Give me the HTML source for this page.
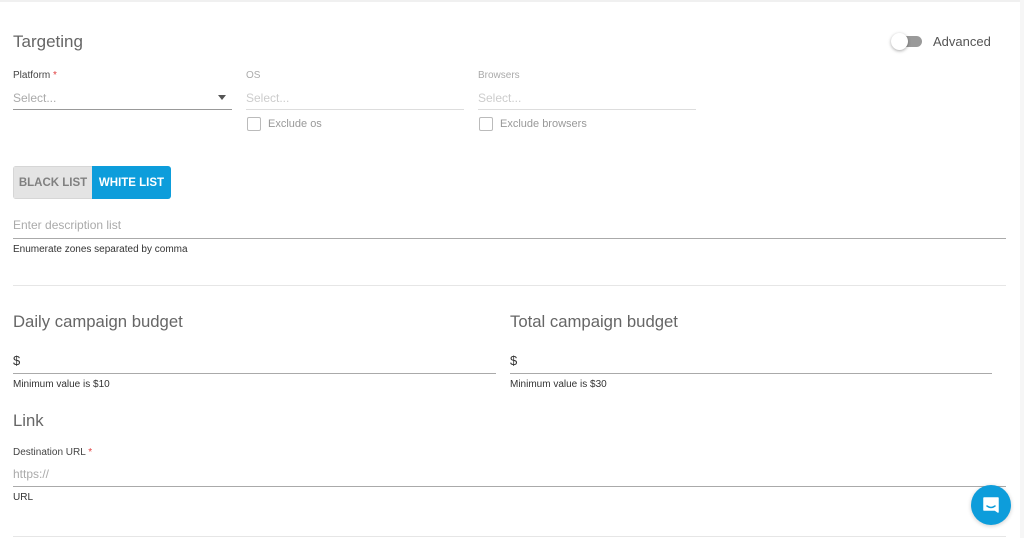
<!DOCTYPE html>
<html><head><meta charset="utf-8"><style>
*{margin:0;padding:0;box-sizing:border-box}
body{width:1024px;height:538px;background:#fff;font-family:"Liberation Sans",sans-serif;position:relative;overflow:hidden;color:#333}
.a{position:absolute;white-space:nowrap}
.h{font-size:16.7px;color:#666;font-weight:normal}
.lbl{font-size:10px;color:#444}
.lblg{font-size:10px;color:#aaa}
.ph{font-size:12px;color:#aaa}
.phl{font-size:12px;color:#ccc}
.line{position:absolute;height:1px;background:#999}
.linel{position:absolute;height:1px;background:#ddd}
.help{font-size:10px;color:#333}
.cb{position:absolute;width:14px;height:14px;border:1px solid #bbb;border-radius:2px}
.red{color:#e04040}
</style></head><body>
<div style="position:absolute;left:0;top:0;width:1024px;height:2px;background:#f0f0f0"></div>
<div style="position:absolute;right:0;top:0;width:4px;height:538px;background:#f6f6f6"></div>

<div class="a h" style="left:13px;top:32px;font-size:17px">Targeting</div>
<div style="position:absolute;left:894px;top:36px;width:28px;height:11px;border-radius:6px;background:#9a9a9a"></div>
<div style="position:absolute;left:891px;top:33px;width:17px;height:17px;border-radius:50%;background:#fff;box-shadow:0 1px 3px rgba(0,0,0,.35)"></div>
<div class="a" style="left:933px;top:34px;font-size:13px;color:#555">Advanced</div>

<div class="a lbl" style="left:13px;top:70px">Platform <span class="red">*</span></div>
<div class="a ph" style="left:13px;top:91px">Select...</div>
<div class="a" style="left:218px;top:95px;width:0;height:0;border-left:4px solid transparent;border-right:4px solid transparent;border-top:5px solid #555"></div>
<div class="line" style="left:13px;top:109px;width:219px"></div>

<div class="a lblg" style="left:246px;top:70px">OS</div>
<div class="a phl" style="left:246px;top:91px">Select...</div>
<div class="linel" style="left:246px;top:109px;width:218px"></div>
<div class="cb" style="left:247px;top:117px"></div>
<div class="a" style="left:268px;top:118px;font-size:11px;color:#999">Exclude os</div>

<div class="a lblg" style="left:478px;top:70px">Browsers</div>
<div class="a phl" style="left:478px;top:91px">Select...</div>
<div class="linel" style="left:478px;top:109px;width:218px"></div>
<div class="cb" style="left:479px;top:117px"></div>
<div class="a" style="left:500px;top:118px;font-size:11px;color:#999">Exclude browsers</div>

<div style="position:absolute;left:13px;top:166px;width:158px;height:33px;border-radius:3px;overflow:hidden;display:flex;font-size:11.5px;font-weight:bold">
<div style="width:79px;background:#e4e4e4;color:#808080;display:flex;align-items:center;justify-content:center;border:1px solid #d6d6d6;border-right:none">BLACK LIST</div>
<div style="width:79px;background:#0d9ddb;color:#fff;display:flex;align-items:center;justify-content:center">WHITE LIST</div>
</div>

<div class="a ph" style="left:13px;top:218px">Enter description list</div>
<div class="line" style="left:13px;top:238px;width:993px;background:#aaa"></div>
<div class="a help" style="left:13px;top:244px">Enumerate zones separated by comma</div>

<div class="linel" style="left:13px;top:285px;width:993px;background:#e6e6e6"></div>

<div class="a h" style="left:13px;top:312px">Daily campaign budget</div>
<div class="a" style="left:13px;top:353px;font-size:13px;color:#333">$</div>
<div class="line" style="left:13px;top:373px;width:483px;background:#aaa"></div>
<div class="a help" style="left:13px;top:379px">Minimum value is $10</div>

<div class="a h" style="left:510px;top:312px">Total campaign budget</div>
<div class="a" style="left:510px;top:353px;font-size:13px;color:#333">$</div>
<div class="line" style="left:510px;top:373px;width:482px;background:#aaa"></div>
<div class="a help" style="left:510px;top:379px">Minimum value is $30</div>

<div class="a h" style="left:13px;top:411px">Link</div>
<div class="a lbl" style="left:13px;top:447px">Destination URL <span class="red">*</span></div>
<div class="a ph" style="left:13px;top:467px">https://</div>
<div class="line" style="left:13px;top:486px;width:993px;background:#aaa"></div>
<div class="a help" style="left:13px;top:492px">URL</div>

<div class="linel" style="left:13px;top:536px;width:993px;background:#e6e6e6"></div>

<div style="position:absolute;left:971px;top:485px;width:40px;height:40px;border-radius:50%;background:#0d9ddb;box-shadow:0 1px 4px rgba(0,0,0,.2)">
<svg width="40" height="40" viewBox="0 0 40 40"><path d="M13 13h14v14l-3-2H13z" fill="#fff" stroke="#fff" stroke-width="1.5" stroke-linejoin="round"/><path d="M16 21q4 3 8 0" fill="none" stroke="#0d9ddb" stroke-width="1.5" stroke-linecap="round"/></svg>
</div>
</body></html>
